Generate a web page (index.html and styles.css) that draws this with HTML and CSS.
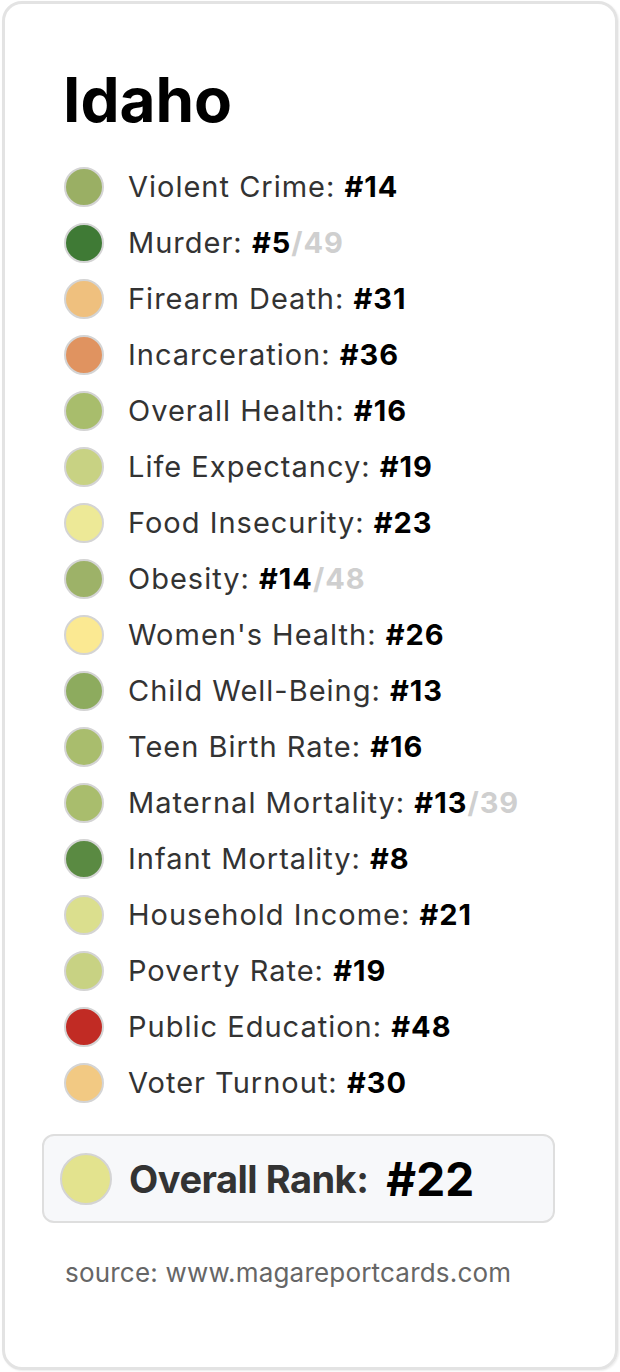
FILE: index.html
```html
<!DOCTYPE html>
<html lang="en">
<head>
<meta charset="utf-8">
<title>Idaho</title>
<link rel="stylesheet" href="styles.css">
</head>
<body>
<div class="card">
  <h1 class="title">Idaho</h1>
  <ul class="list">
    <li class="row"><span class="dot" style="background:#9aaf64"></span><span class="label">Violent Crime: <b>#14</b></span></li>
    <li class="row"><span class="dot" style="background:#3f7a35"></span><span class="label">Murder: <b>#5</b><b class="of">/49</b></span></li>
    <li class="row"><span class="dot" style="background:#efc07e"></span><span class="label">Firearm Death: <b>#31</b></span></li>
    <li class="row"><span class="dot" style="background:#e09360"></span><span class="label">Incarceration: <b>#36</b></span></li>
    <li class="row"><span class="dot" style="background:#a8bd6c"></span><span class="label">Overall Health: <b>#16</b></span></li>
    <li class="row"><span class="dot" style="background:#c8d283"></span><span class="label">Life Expectancy: <b>#19</b></span></li>
    <li class="row"><span class="dot" style="background:#ede997"></span><span class="label">Food Insecurity: <b>#23</b></span></li>
    <li class="row"><span class="dot" style="background:#9db268"></span><span class="label">Obesity: <b>#14</b><b class="of">/48</b></span></li>
    <li class="row"><span class="dot" style="background:#fbe992"></span><span class="label">Women's Health: <b>#26</b></span></li>
    <li class="row"><span class="dot" style="background:#8dab5e"></span><span class="label">Child Well-Being: <b>#13</b></span></li>
    <li class="row"><span class="dot" style="background:#a9bd6d"></span><span class="label">Teen Birth Rate: <b>#16</b></span></li>
    <li class="row"><span class="dot" style="background:#a9bd6d"></span><span class="label">Maternal Mortality: <b>#13</b><b class="of">/39</b></span></li>
    <li class="row"><span class="dot" style="background:#5a8a42"></span><span class="label">Infant Mortality: <b>#8</b></span></li>
    <li class="row"><span class="dot" style="background:#dbdf8e"></span><span class="label">Household Income: <b>#21</b></span></li>
    <li class="row"><span class="dot" style="background:#c8d283"></span><span class="label">Poverty Rate: <b>#19</b></span></li>
    <li class="row"><span class="dot" style="background:#c12b24"></span><span class="label">Public Education: <b>#48</b></span></li>
    <li class="row"><span class="dot" style="background:#f2c983"></span><span class="label">Voter Turnout: <b>#30</b></span></li>
  </ul>
  <div class="overall">
    <span class="dot big" style="background:#e3e38e"></span>
    <span class="overall-label">Overall Rank:</span>
    <span class="overall-rank">#22</span>
  </div>
  <p class="source">source: www.magareportcards.com</p>
</div>
</body>
</html>
```

FILE: styles.css
```css
html, body {
  margin: 0;
  padding: 0;
  background: #ffffff;
}
body {
  font-family: Inter, "Noto Sans", "Liberation Sans", sans-serif;
  width: 620px;
  height: 1372px;
  overflow: hidden;
}
.card {
  box-sizing: border-box;
  margin: 1px 0 0 2px;
  width: 616px;
  height: 1369px;
  border: 3px solid #e3e3e3;
  border-radius: 20px;
  padding: 60px 0 0 59px;
  box-shadow: 1px 1px 2px rgba(0, 0, 0, 0.08);
}
.title {
  margin: 0 0 0 -1px;
  font-size: 62px;
  line-height: 72px;
  font-weight: 700;
  color: #000;
}
.list {
  list-style: none;
  margin: 23px 0 0 0;
  padding: 0;
}
.row {
  height: 56px;
  display: flex;
  align-items: center;
  gap: 24px;
}
.dot {
  box-sizing: border-box;
  flex: none;
  width: 40px;
  height: 40px;
  border-radius: 50%;
  border: 2px solid #d4d4d4;
}
.label {
  font-size: 29px;
  letter-spacing: 1px;
  color: #333;
  line-height: 34px;
}
.label b {
  font-weight: 700;
  color: #000;
}
.label b.of {
  color: #cfcfcf;
}
.overall {
  box-sizing: border-box;
  margin: 23px 0 0 -22px;
  width: 513px;
  height: 89px;
  border: 2px solid #dedede;
  border-radius: 12px;
  background: #f7f8fa;
  display: flex;
  align-items: center;
  padding-left: 16px;
}
.dot.big {
  width: 52px;
  height: 52px;
}
.overall-label {
  margin-left: 17px;
  font-size: 38px;
  font-weight: 700;
  color: #333;
  letter-spacing: -0.5px;
}
.overall-rank {
  margin-left: 18px;
  font-size: 46px;
  font-weight: 700;
  color: #000;
}
.source {
  margin: 34px 0 0 1px;
  font-size: 26px;
  letter-spacing: 0.2px;
  color: #666;
}
```
